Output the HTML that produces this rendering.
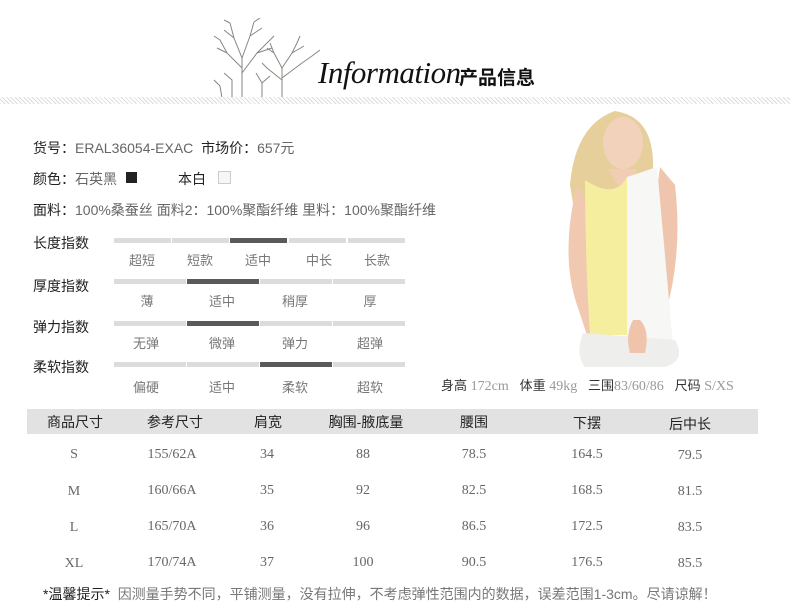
<!DOCTYPE html>
<html><head><meta charset="utf-8"><style>
*{margin:0;padding:0;box-sizing:border-box}
body{width:790px;height:609px;background:#fff;position:relative;overflow:hidden;font-family:"Liberation Sans","Noto Sans CJK SC",sans-serif;color:#333}
.a{position:absolute;white-space:nowrap}
.g{color:#666}
.bar{position:absolute;height:5px;background:#dcdcdc}
.bar.d{background:#5a5a5a}
.lb{position:absolute;font-size:13px;color:#777;text-align:center;transform:translateX(-50%);white-space:nowrap}
.t{font-size:14px;color:#222}
.sr{font-family:"Liberation Serif","Noto Serif CJK SC",serif;color:#666;font-size:14px}
.c{position:absolute;transform:translateX(-50%);white-space:nowrap}
</style></head><body>
<!-- header -->
<svg class="a" style="left:212px;top:18px" width="110" height="82" viewBox="0 0 110 82" fill="none" stroke="#8a8580" stroke-width="1">
<path d="M30 80 L30 40 L22 20 L18 5 M30 40 L38 18 L42 4 M30 50 L15 35 L8 22 M30 55 L45 35 L55 25 M22 20 L12 12 M38 18 L50 10 M15 35 L5 30 M45 35 L60 30 M18 5 L12 2 M42 4 L48 0 M8 22 L2 18 M55 25 L62 18"/>
<path d="M70 80 L70 50 L62 35 L58 25 M70 50 L80 35 L85 25 M70 60 L90 45 L100 38 M70 62 L55 50 L50 45 M62 35 L55 30 M80 35 L92 28 M100 38 L108 32 M85 25 L88 18"/>
<path d="M50 80 L50 65 L44 55 M50 65 L58 58 M20 80 L20 62 L12 55 M10 80 L8 68 L2 62"/>
</svg>
<div class="a" style="left:318px;top:55px;font-family:'Liberation Serif',serif;font-style:italic;font-size:31px;color:#111;letter-spacing:-0.5px">Information</div>
<div class="a" style="left:459px;top:63px;font-size:19px;color:#111;font-weight:bold">产品信息</div>
<div class="a" style="left:0;top:97px;width:790px;height:7px;background:repeating-linear-gradient(45deg,#ddd 0 1px,#fff 1px 3px)"></div>
<!-- info -->
<div class="a t" style="left:33px;top:138px">货号：<span class="g">ERAL36054-EXAC</span>&nbsp; 市场价：<span class="g">657元</span></div>
<div class="a t" style="left:33px;top:169px">颜色：<span class="g">石英黑</span></div>
<div class="a" style="left:126px;top:172px;width:11px;height:11px;background:#222"></div>
<div class="a t g" style="left:178px;top:169px">本白</div>
<div class="a" style="left:218px;top:171px;width:13px;height:13px;border:1px solid #ccc;background:#f6f6f6"></div>
<div class="a t" style="left:33px;top:200px">面料：<span class="g">100%桑蚕丝 面料2：100%聚酯纤维 里料：100%聚酯纤维</span></div>
<!-- scales -->
<div class="a t" style="left:33px;top:233px">长度指数</div>
<div class="bar" style="left:114px;top:238px;width:57px"></div>
<div class="bar" style="left:172px;top:238px;width:57px"></div>
<div class="bar d" style="left:230px;top:238px;width:57px"></div>
<div class="bar" style="left:289px;top:238px;width:57px"></div>
<div class="bar" style="left:348px;top:238px;width:57px"></div>
<div class="lb" style="left:142px;top:250px">超短</div><div class="lb" style="left:200px;top:250px">短款</div><div class="lb" style="left:258px;top:250px">适中</div><div class="lb" style="left:319px;top:250px">中长</div><div class="lb" style="left:377px;top:250px">长款</div>
<div class="a t" style="left:33px;top:276px">厚度指数</div>
<div class="bar" style="left:114px;top:279px;width:72px"></div>
<div class="bar d" style="left:187px;top:279px;width:72px"></div>
<div class="bar" style="left:260px;top:279px;width:72px"></div>
<div class="bar" style="left:333px;top:279px;width:72px"></div>
<div class="lb" style="left:147px;top:291px">薄</div><div class="lb" style="left:222px;top:291px">适中</div><div class="lb" style="left:295px;top:291px">稍厚</div><div class="lb" style="left:370px;top:291px">厚</div>
<div class="a t" style="left:33px;top:317px">弹力指数</div>
<div class="bar" style="left:114px;top:321px;width:72px"></div>
<div class="bar d" style="left:187px;top:321px;width:72px"></div>
<div class="bar" style="left:260px;top:321px;width:72px"></div>
<div class="bar" style="left:333px;top:321px;width:72px"></div>
<div class="lb" style="left:146px;top:333px">无弹</div><div class="lb" style="left:222px;top:333px">微弹</div><div class="lb" style="left:295px;top:333px">弹力</div><div class="lb" style="left:370px;top:333px">超弹</div>
<div class="a t" style="left:33px;top:357px">柔软指数</div>
<div class="bar" style="left:114px;top:362px;width:72px"></div>
<div class="bar" style="left:187px;top:362px;width:72px"></div>
<div class="bar d" style="left:260px;top:362px;width:72px"></div>
<div class="bar" style="left:333px;top:362px;width:72px"></div>
<div class="lb" style="left:146px;top:377px">偏硬</div><div class="lb" style="left:222px;top:377px">适中</div><div class="lb" style="left:295px;top:377px">柔软</div><div class="lb" style="left:370px;top:377px">超软</div>
<!-- model -->
<svg class="a" style="left:515px;top:105px" width="200" height="270" viewBox="0 0 200 270">
<path d="M55 80 Q60 20 100 6 Q140 12 138 65 L120 75 L60 110 Z" fill="#e6cf9a"/>
<ellipse cx="108" cy="38" rx="20" ry="26" fill="#f3d2bc"/>
<path d="M62 80 Q45 150 62 200 L72 230 L82 230 L72 100 Z" fill="#f0c9b0"/>
<path d="M145 62 L160 80 Q168 150 150 210 L135 225 L140 100 Z" fill="#efc6ad"/>
<path d="M92 64 L122 64 L112 92 Z" fill="#f1cdb5"/>
<path d="M70 75 Q100 95 112 72 L112 230 L75 230 Q70 150 70 75 Z" fill="#f5ee9e"/>
<path d="M112 72 L142 62 Q150 150 158 240 L150 250 L112 240 Z" fill="#f7f7f5"/>
<path d="M68 228 L160 235 Q172 255 150 262 L70 262 Q60 250 68 228 Z" fill="#eeeeec"/>
<path d="M118 215 Q110 230 115 248 L130 248 Q135 225 125 215 Z" fill="#efc4ab"/>
</svg>
<div class="a" style="left:441px;top:375px;font-size:13px;color:#333">身高 <span class="sr" style="color:#999;font-size:14px">172cm</span>&nbsp;&nbsp; 体重 <span class="sr" style="color:#999;font-size:14px">49kg</span>&nbsp;&nbsp; 三围<span class="sr" style="color:#999;font-size:14px">83/60/86</span>&nbsp;&nbsp; 尺码 <span class="sr" style="color:#999;font-size:14px">S/XS</span></div>
<!-- table -->
<div class="a" style="left:27px;top:409px;width:731px;height:25px;background:#e2e2e2"></div>
<div class="c t" style="left:75px;top:412px">商品尺寸</div>
<div class="c t" style="left:175px;top:412px">参考尺寸</div>
<div class="c t" style="left:268px;top:412px">肩宽</div>
<div class="c t" style="left:366px;top:412px">胸围-腋底量</div>
<div class="c t" style="left:474px;top:412px">腰围</div>
<div class="c t" style="left:587px;top:413px">下摆</div>
<div class="c t" style="left:690px;top:414px">后中长</div>
<div class="sr">
<div class="c" style="left:74px;top:447px">S</div><div class="c" style="left:172px;top:447px">155/62A</div><div class="c" style="left:267px;top:447px">34</div><div class="c" style="left:363px;top:447px">88</div><div class="c" style="left:474px;top:447px">78.5</div><div class="c" style="left:587px;top:447px">164.5</div><div class="c" style="left:690px;top:448px">79.5</div>
<div class="c" style="left:74px;top:484px">M</div><div class="c" style="left:172px;top:483px">160/66A</div><div class="c" style="left:267px;top:483px">35</div><div class="c" style="left:363px;top:483px">92</div><div class="c" style="left:474px;top:483px">82.5</div><div class="c" style="left:587px;top:483px">168.5</div><div class="c" style="left:690px;top:484px">81.5</div>
<div class="c" style="left:74px;top:520px">L</div><div class="c" style="left:172px;top:519px">165/70A</div><div class="c" style="left:267px;top:519px">36</div><div class="c" style="left:363px;top:519px">96</div><div class="c" style="left:474px;top:519px">86.5</div><div class="c" style="left:587px;top:519px">172.5</div><div class="c" style="left:690px;top:520px">83.5</div>
<div class="c" style="left:74px;top:556px">XL</div><div class="c" style="left:172px;top:555px">170/74A</div><div class="c" style="left:267px;top:555px">37</div><div class="c" style="left:363px;top:555px">100</div><div class="c" style="left:474px;top:555px">90.5</div><div class="c" style="left:587px;top:555px">176.5</div><div class="c" style="left:690px;top:556px">85.5</div>
</div>
<div class="a" style="left:43px;top:584px;font-size:14px;color:#222">*温馨提示*&nbsp; <span style="color:#777">因测量手势不同，平铺测量，没有拉伸，不考虑弹性范围内的数据，误差范围1-3cm。尽请谅解！</span></div>
</body></html>
